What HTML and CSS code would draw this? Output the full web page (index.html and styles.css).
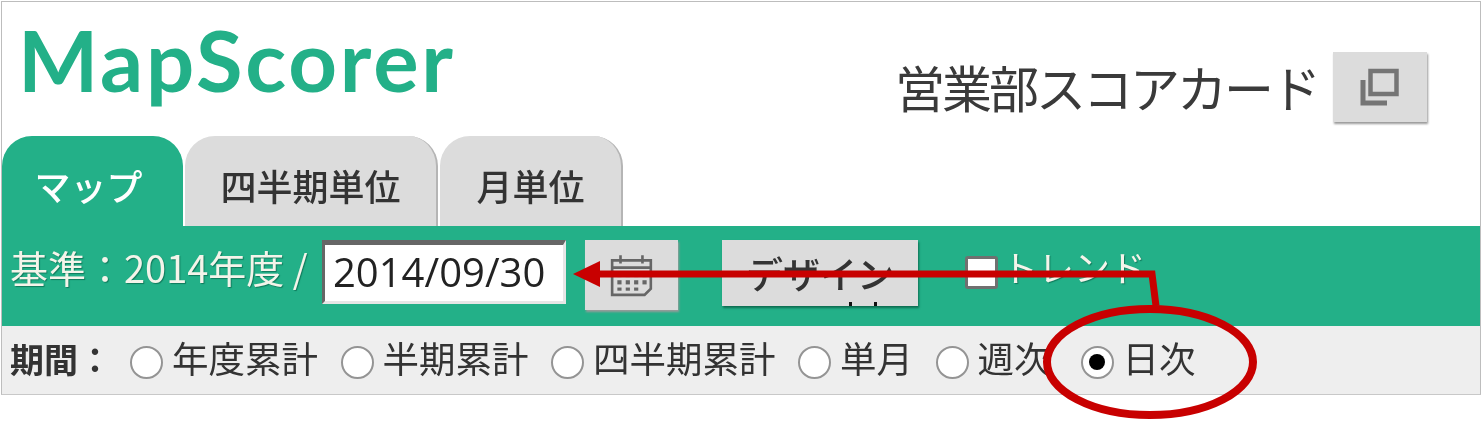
FILE: index.html
```html
<!DOCTYPE html>
<html lang="ja">
<head>
<meta charset="utf-8">
<title>MapScorer</title>
<link rel="stylesheet" href="styles.css">
</head>
<body>
<div class="frame">
  <header class="header">
    <div class="logo">MapScorer</div>
    <div class="title-group">
      <span class="title">営業部スコアカード</span>
      <button class="icon-btn copy-btn" type="button" aria-label="コピー">
        <svg width="42" height="38" viewBox="0 0 42 38" fill="none" stroke="#757575">
          <rect x="11.5" y="3" width="26" height="23" stroke-width="4.5"/>
          <path d="M4 12v23h24" stroke-width="5"/>
        </svg>
      </button>
    </div>
  </header>
  <nav class="tabs">
    <div class="tab tab-active">マップ</div>
    <div class="tab tab-wide">四半期単位</div>
    <div class="tab">月単位</div>
  </nav>
  <div class="toolbar">
    <span class="base-label">基準：2014年度 /</span>
    <div class="date-input">2014/09/30</div>
    <button class="icon-btn cal-btn" type="button" aria-label="カレンダー">
      <svg width="46" height="46" viewBox="0 0 44 44" fill="none" stroke="#666" stroke-width="2.5">
        <path d="M3 8h37v27l-6 6H3z"/>
        <path d="M3 15h37M11 3v8M32 3v8"/>
        <g fill="#666" stroke="none">
          <rect x="8" y="20" width="4" height="4"/><rect x="16" y="20" width="4" height="4"/><rect x="24" y="20" width="4" height="4"/><rect x="32" y="20" width="4" height="4"/>
          <rect x="8" y="27" width="4" height="4"/><rect x="16" y="27" width="4" height="4"/><rect x="24" y="27" width="4" height="4"/><rect x="32" y="27" width="4" height="4"/>
          <rect x="8" y="34" width="4" height="3"/><rect x="16" y="34" width="4" height="3"/><rect x="24" y="34" width="4" height="3"/>
        </g>
      </svg>
    </button>
    <button class="design-btn" type="button">デザイン<i class="tick tick-a"></i><i class="tick tick-b"></i></button>
    <span class="check"></span>
    <span class="trend">トレンド</span>
  </div>
  <div class="period">
    <strong class="period-label">期間：</strong>
    <span class="radio"></span><span class="opt">年度累計</span>
    <span class="radio"></span><span class="opt">半期累計</span>
    <span class="radio"></span><span class="opt">四半期累計</span>
    <span class="radio"></span><span class="opt">単月</span>
    <span class="radio"></span><span class="opt opt-last">週次</span>
    <span class="radio radio-on"></span><span class="opt">日次</span>
  </div>
</div>
<svg class="annotation" width="1482" height="424" viewBox="0 0 1482 424" fill="none">
  <path d="M590 274H1152L1156 306" stroke="#c80000" stroke-width="7"/>
  <path d="M573 274l27-13v26z" fill="#c80000"/>
  <ellipse cx="1150" cy="362" rx="103" ry="53" stroke="#c80000" stroke-width="8"/>
</svg>
</body>
</html>
```
FILE: styles.css
```css
* { box-sizing: border-box; }
html, body { margin: 0; padding: 0; background: #fff; }
body { width: 1482px; height: 424px; position: relative; overflow: hidden; font-family: "Noto Sans CJK JP", "Liberation Sans", sans-serif; color: #333; }
.frame { width: 1480px; height: 394px; margin: 1px 0 0 1px; border: 1px solid #bdbdbd; border-bottom-color: #c8c8c8; display: flex; flex-direction: column; filter: blur(0.6px); }
.header { height: 134px; display: flex; justify-content: space-between; padding: 0 53px 0 16px; }
.logo { font-family: Lato, sans-serif; font-weight: 700; font-size: 85px; line-height: 1; letter-spacing: 2.8px; color: #23b088; padding-top: 15px; }
.title-group { display: flex; align-items: flex-start; gap: 15px; padding-top: 50px; }
.title { font-size: 50px; line-height: 68px; letter-spacing: -3px; font-weight: 400; color: #3a3a3a; }
.icon-btn { border: 0; padding: 0; background: #dcdcdc; display: flex; align-items: center; justify-content: center; box-shadow: 1px 2px 2px #9a9a9a; }
.copy-btn { width: 94px; height: 70px; }
.tabs { height: 90px; display: flex; gap: 2px; }
.tab { width: 183px; padding-top: 19px; text-align: center; font-size: 36px; line-height: 60px; font-weight: 500; background: #dcdcdc; border-radius: 30px 30px 0 0; border-right: 2px solid #b5b5b5; }
.tab-wide { width: 253px; }
.tab-active { width: 181px; padding-right: 8px; background: #23b088; color: #fff; border-right: 0; }
.toolbar { height: 100px; background: #23b088; display: flex; align-items: flex-start; padding: 14px 0 0 8px; color: #f4f4ea; }
.base-label { font-size: 38px; line-height: 54px; text-shadow: 1px 1px 1px #107a5c; width: 312px; white-space: nowrap; }
.date-input { width: 244px; height: 64px; background: #fff; border: 3px solid #e6e6e6; border-top: 5px solid #666; border-left-color: #666; color: #222; font-family: "Open Sans", sans-serif; font-size: 40px; line-height: 54px; padding-left: 8px; margin-right: 19px; }
.cal-btn { width: 93px; height: 70px; margin-right: 44px; }
.design-btn { position: relative; width: 196px; height: 66px; border: 0; padding: 0; background: #dcdcdc; box-shadow: 1px 2px 2px #0d6e52; font-family: inherit; font-size: 37px; line-height: 60px; font-weight: 500; color: #333; margin-right: 47px; }
.tick { position: absolute; bottom: 0; width: 3px; height: 4px; background: #111; }
.tick-a { left: 127px; }
.tick-b { left: 152px; }
.check { width: 33px; height: 33px; margin-top: 16px; background: #fff; border: 3px solid #707070; border-radius: 3px; margin-right: 4px; }
.trend { font-size: 36px; line-height: 52px; text-shadow: 1px 1px 1px #107a5c; }
.period { height: 68px; background: #eee; display: flex; align-items: center; padding-left: 8px; }
.period-label { font-size: 34px; line-height: 50px; width: 120px; font-weight: 700; padding-bottom: 2px; height: 52px; }
.radio { width: 33px; height: 33px; margin-top: 4px; background: #fff; border: 2.5px solid #949494; border-radius: 50%; margin-right: 9px; display: flex; align-items: center; justify-content: center; }
.radio-on::after { content: ""; width: 16px; height: 16px; border-radius: 50%; background: #000; }
.opt { font-size: 36.5px; line-height: 50px; height: 54px; margin-right: 22.5px; }
.opt-last { margin-right: 30px; }
.annotation { position: absolute; left: 0; top: 0; }
```
